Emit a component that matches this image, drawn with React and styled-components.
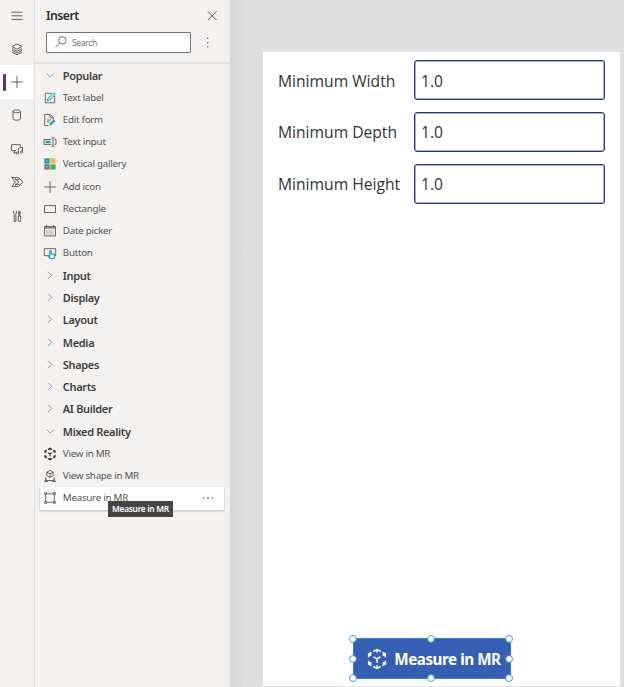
import React from 'react';
import styled, { createGlobalStyle, css } from 'styled-components';

const GlobalStyle = createGlobalStyle`
  * { box-sizing: border-box; }
  body { margin: 0; overflow: hidden; font-family: "Open Sans", "Noto Sans", sans-serif; }
`;

const Shell = styled.div`
  display: flex;
  width: 624px;
  height: 687px;
  overflow: hidden;
  background: #dfdfdf;
`;

const Rail = styled.nav`
  flex: none;
  width: 35px;
  padding-right: 1px;
  background: #f3f2f1;
  border-right: 1px solid #e2e0df;
`;

const RailButton = styled.div`
  display: flex;
  align-items: center;
  width: 33px;
  height: 33.4px;
  padding-left: 3px;
  background: ${(p) => (p.$active ? '#fff' : 'transparent')};
  &:first-child { height: 32px; }
`;

const RailMarker = styled.span`
  width: 3px;
  height: 17px;
  border-radius: 1px;
  background: ${(p) => (p.$active ? '#742774' : 'transparent')};
`;

const Glyph = styled.svg`
  flex: none;
  display: block;
  width: ${(p) => p.$size || 14}px;
  height: ${(p) => p.$size || 14}px;
  fill: none;
  stroke: ${(p) => p.$color || '#5b5957'};
  stroke-width: ${(p) => p.$weight || 1};
  overflow: visible;
`;

const RailGlyph = styled(Glyph)`
  margin-left: 4px;
`;

const Panel = styled.aside`
  flex: none;
  width: 195px;
  background: #f3f2f1;
  color: #454341;
`;

const PanelHeader = styled.header`
  display: flex;
  align-items: center;
  justify-content: space-between;
  height: 31px;
  padding: 0 11px;
`;

const Title = styled.h1`
  margin: 0;
  font-family: "Noto Sans", sans-serif;
  font-size: 12.3px;
  line-height: 18px;
  font-weight: 600;
  letter-spacing: -0.55px;
  color: #323130;
`;

const SearchRow = styled.div`
  display: flex;
  align-items: center;
  height: 33px;
  padding: 0 11px 10px;
  padding-top: 1px;
  gap: 10px;
  border-bottom: 2px solid #e3e2e1;
`;

const SearchBox = styled.div`
  display: flex;
  align-items: center;
  gap: 5px;
  flex: none;
  width: 145px;
  height: 21px;
  padding-left: 8px;
  background: #fff;
  border: 1px solid #777573;
  border-radius: 1px;
  font-size: 8.5px;
  letter-spacing: -0.35px;
  color: #686664;
`;

const List = styled.div`
  padding-top: 0.6px;
`;

const Row = styled.div`
  display: flex;
  align-items: center;
  height: 22.25px;
  padding-left: 8px;
  line-height: 14px;
  white-space: nowrap;
`;

const GroupRow = styled(Row)`
  font-family: "Noto Sans", sans-serif;
  font-size: 11px;
  font-weight: 600;
  letter-spacing: -0.33px;
  color: #403e3d;
`;

const ItemRow = styled(Row)`
  position: relative;
  padding-bottom: 0.8px;
  font-family: "Noto Sans", sans-serif;
  font-size: 9.8px;
  letter-spacing: -0.27px;
  color: #555351;
  ${(p) =>
    p.$hover &&
    css`
      margin: 0 6px 0 5px;
      padding-left: 3px;
      padding-right: 10px;
      background: #fff;
      box-shadow: 0 1px 2px rgba(0, 0, 0, 0.22);
    `}
`;

const RowLabel = styled.span`
  margin-left: 5.8px;
`;

const MoreGlyph = styled(Glyph)`
  margin-left: auto;
`;

const Tooltip = styled.div`
  position: absolute;
  left: 68px;
  top: 14px;
  display: flex;
  align-items: center;
  justify-content: center;
  width: 65px;
  height: 16px;
  background: #474645;
  color: #fff;
  font-size: 8.4px;
  font-weight: 600;
  letter-spacing: -0.3px;
`;

const Workspace = styled.main`
  flex: 1;
  padding: 52px 4px 2px 33px;
  background: linear-gradient(90deg, #d8d8d8 0, #dadada 8px, #dfdfdf 14px);
`;

const Screen = styled.section`
  display: flex;
  flex-direction: column;
  justify-content: space-between;
  height: 634px;
  padding: 8px 15px 7px;
  background: #fff;
  box-shadow: 0 0 1px #fff;
`;

const Form = styled.div`
  display: grid;
  grid-template-columns: 136px 191px;
  row-gap: 11.8px;
`;

const FieldLabel = styled.label`
  align-self: center;
  padding-top: 1px;
  font-size: 15.65px;
  line-height: 20px;
  color: #333;
  white-space: nowrap;
`;

const Field = styled.div`
  display: flex;
  align-items: center;
  height: 40px;
  padding: 1px 0 0 6px;
  border: 1px solid #283583;
  box-shadow: inset 0 0 0 1px #a9afd2;
  border-radius: 3px;
  font-size: 15.6px;
  color: #333;
`;

const MeasureButton = styled.div`
  position: relative;
  display: flex;
  align-items: center;
  width: 158px;
  height: 41px;
  margin-left: 74.5px;
  padding-left: 13px;
  padding-top: 1px;
  gap: 7.8px;
  background: #355fb3;
  border: 1px solid #2d83cf;
  color: #fff;
  font-family: "Noto Sans", sans-serif;
  font-size: 15.2px;
  font-weight: 700;
  letter-spacing: -0.45px;
  white-space: nowrap;
`;

const Handle = styled.span`
  position: absolute;
  left: ${(p) => p.$x}%;
  top: ${(p) => p.$y}%;
  width: 6px;
  height: 6px;
  margin: -3px 0 0 -3.6px;
  border-radius: 50%;
  background: #fff;
  outline: 1px solid #4b9fdc;
`;

const teal = '#20a7ac';

const railIcons = [
  <path d="M1.5 3.2h11M1.5 6.8h11M1.5 10.4h11" />,
  <path d="M7 2 12 4.5 7 7.2 2 4.5ZM2 6.5l5 2.8 5-2.8M2 8.3l5 2.8 5-2.8M2 10l5 2.8 5-2.8" />,
  <path d="M7 1.2v11.6M1.2 7h11.6" />,
  <path d="M3 3.3v7.4c0 2 7.5 2 7.5 0V3.3c0-1.9-7.5-1.9-7.5 0s7.5 1.9 7.5 0" />,
  <g><path d="M6 8.7H1.5v-6h9v2M3.3 11h3M4.5 8.7V11" /><path d="M8.5 11V6.2l4-1v4.7" /><circle cx="7.5" cy="11" r="1.1" /><circle cx="11.5" cy="10" r="1.1" /></g>,
  <path d="M1.8 2.5h3L8.5 7l-3.7 4.5h-3L5.4 7ZM5.3 2.5h3.5L12.6 7l-3.8 4.5H5.3M5 4.7h4.5M5 9.3h4.5" />,
  <path d="M4.2 6v6.3h1.7V6M3.7 1.8v2.7l1.3 1 1.4-1V1.8M8.8 1.8v5M10 1.8v5M8.2 7h2.5v5.2H8.2ZM7.8 4h3.2" />,
];

const itemIcons = {
  label: <g><path d="M8.5 2.3H2.3v9.5h9.4V5" /><path d="m4 10 .7-2.5L10.8 1.6l1.7 1.7-6 6Z" stroke={teal} fill="#a6dfe0" /></g>,
  form: <g><path d="M5.5 12.5H1.7v-11h5.6l3 3v2M7 1.5v3.3h3.3M4 7h4M4 9h2.5" /><path d="m6.8 11.8 4.8-4.5" stroke={teal} strokeWidth="2.4" /></g>,
  input: <g><path d="M8.3 4.5H1v4.9h7.3M11.5 4.5H13v4.9h-1.5M8.5 2.5c1 0 1.5.4 1.5 1v7c0 .6-.5 1-1.5 1M11.6 2.5c-1 0-1.6.4-1.6 1M11.6 11.5c-1 0-1.6-.4-1.6-1" /><path d="M2.5 7h5" stroke={teal} strokeWidth="2.4" /></g>,
  gallery: <g stroke="none"><path fill="#159fa5" d="M1.3 1.3h5.3v5.3h-5.3z" /><path fill="#f5b64e" d="M7.3 1.3h5.3v5.3h-5.3z" /><path fill="#777" d="M1.3 7.3h5.3v5.3h-5.3z" /><path fill="#55aa5c" d="M7.3 7.3h5.3v5.3h-5.3z" /><path fill="#73c6ca" d="M3 3h1.5v1.5H3z" /><path fill="#bbb" d="M3 9h1.5v1.5H3z" /></g>,
  plus: <path d="M7 1.2v11.6M1.2 7h11.6" />,
  rect: <path d="M1.5 3.5h11v7h-11z" />,
  date: <g><path d="M1.5 2.5h11v9.4h-11zM3.5 1v2M10.5 1v2" /><path d="M2 3.9h10" strokeWidth="1.4" stroke="#777" /><path d="M4 6v5M6 6v5M8 6v5M10 6v5" stroke="#aaa" /></g>,
  button: <g><path d="M5 9.7H1.3v-7h11.4v7h-1" /><path d="M6.8 9.8V5.3c0-1 1.4-1 1.4 0v2.4l3 .7c.7.3.5 1 .3 1.8l-.6 2.3H7.3L5 9.8c.4-.8 1.3-.4 1.8 0Z" stroke={teal} strokeWidth="1.2" fill="#e5f5f5" /></g>,
  shape: <g><path d="m7 1.3 3.2 1.8v3.6L7 8.4 3.8 6.7V3.1ZM3.8 3.1 7 4.9l3.2-1.8M7 4.9v3.5M2.8 8.2v3.4h8.4V8.2M1.4 12.5l1.7-2 1.5 2ZM9.5 12.5l1.5-2 1.6 2ZM5.5 11.6h3" /></g>,
  measure: <g><path d="M3.8 2.7h6.4M3.8 11.3h6.4M2.7 3.8v6.4M11.3 3.8v6.4" /><path d="M1.6 1.6h2v2h-2zM10.4 1.6h2v2h-2zM1.6 10.4h2v2h-2zM10.4 10.4h2v2h-2z" /></g>,
};

// Broken cube outline with an inner vertex and outward ticks.
const CubeShape = () => (
  <path d="M4.8 2.5 7 1.3l2.2 1.2M7 1.3v2M2 6V4l1.7-.9M2 4l1.6.9M12 6V4l-1.7-.9M12 4l-1.6.9M2 8v2l1.7.9M2 10l1.6-.9M12 8v2l-1.7.9M12 10l-1.6-.9M4.8 11.5 7 12.7l2.2-1.2M7 12.7v-2M4.9 5.7 7 6.9l2.1-1.2M7 6.9v2.3" />
);

const rows = [
  { group: 'Popular', open: true },
  { item: 'Text label', icon: 'label' },
  { item: 'Edit form', icon: 'form' },
  { item: 'Text input', icon: 'input' },
  { item: 'Vertical gallery', icon: 'gallery' },
  { item: 'Add icon', icon: 'plus' },
  { item: 'Rectangle', icon: 'rect' },
  { item: 'Date picker', icon: 'date' },
  { item: 'Button', icon: 'button' },
  { group: 'Input' },
  { group: 'Display' },
  { group: 'Layout' },
  { group: 'Media' },
  { group: 'Shapes' },
  { group: 'Charts' },
  { group: 'AI Builder' },
  { group: 'Mixed Reality', open: true },
  { item: 'View in MR', icon: 'cube' },
  { item: 'View shape in MR', icon: 'shape' },
  { item: 'Measure in MR', icon: 'measure', hover: true },
];

const handles = [[0, 0], [50, 0], [100, 0], [0, 50], [100, 50], [0, 100], [50, 100], [100, 100]];

function InsertRow({ group, open, item, icon, hover }) {
  if (group) {
    return (
      <GroupRow>
        <Glyph viewBox="0 0 14 14" $color="#92908e" $weight={0.9}>
          <path d={open ? 'm3.5 4.5 3.7 3.6 3.7-3.6' : 'm5 2.6 3.7 3.7L5 10'} />
        </Glyph>
        <RowLabel>{group}</RowLabel>
      </GroupRow>
    );
  }
  return (
    <ItemRow $hover={hover}>
      <Glyph viewBox="0 0 14 14" $weight={icon === 'cube' ? 1.2 : 0.9} $color={icon === 'cube' ? '#302e2d' : undefined}>
        {icon === 'cube' ? <CubeShape /> : itemIcons[icon]}
      </Glyph>
      <RowLabel>{item}</RowLabel>
      {hover && (
        <>
          <MoreGlyph viewBox="0 0 12 12" $size={12}>
            <g fill="#555351" stroke="none"><circle cx="1.5" cy="6" r=".8" /><circle cx="6" cy="6" r=".8" /><circle cx="10.5" cy="6" r=".8" /></g>
          </MoreGlyph>
          <Tooltip>Measure in MR</Tooltip>
        </>
      )}
    </ItemRow>
  );
}

export default function App() {
  return (
    <>
      <GlobalStyle />
      <Shell>
        <Rail>
          {railIcons.map((icon, i) => (
            <RailButton key={i} $active={i === 2}>
              <RailMarker $active={i === 2} />
              <RailGlyph viewBox="0 0 14 14" $weight={0.95}>{icon}</RailGlyph>
            </RailButton>
          ))}
        </Rail>
        <Panel>
          <PanelHeader>
            <Title>Insert</Title>
            <Glyph viewBox="0 0 14 14"><path d="m2.9 2.4 8.6 8.6M11.5 2.4l-8.6 8.6" /></Glyph>
          </PanelHeader>
          <SearchRow>
            <SearchBox>
              <Glyph viewBox="0 0 12 12" $size={12} $color="#8f4d91"><circle cx="7.4" cy="4.4" r="3.7" /><path d="M4.7 7.1.5 11.2" /></Glyph>
              Search
            </SearchBox>
            <Glyph viewBox="0 0 14 14"><g fill="#8a4b8d" stroke="none"><path d="M6 2.8h1.3v1.3H6zM6 6.9h1.3v1.3H6zM6 11h1.3v1.3H6z" /></g></Glyph>
          </SearchRow>
          <List>
            {rows.map((row) => <InsertRow key={row.group || row.item} {...row} />)}
          </List>
        </Panel>
        <Workspace>
          <Screen>
            <Form>
              <FieldLabel>Minimum Width</FieldLabel><Field>1.0</Field>
              <FieldLabel>Minimum Depth</FieldLabel><Field>1.0</Field>
              <FieldLabel>Minimum Height</FieldLabel><Field>1.0</Field>
            </Form>
            <MeasureButton>
              <Glyph viewBox="1 1 12 12" $size={20} $color="#fff" $weight={0.9}><CubeShape /></Glyph>
              Measure in MR
              {handles.map(([x, y]) => <Handle key={`${x}-${y}`} $x={x} $y={y} />)}
            </MeasureButton>
          </Screen>
        </Workspace>
      </Shell>
    </>
  );
}
